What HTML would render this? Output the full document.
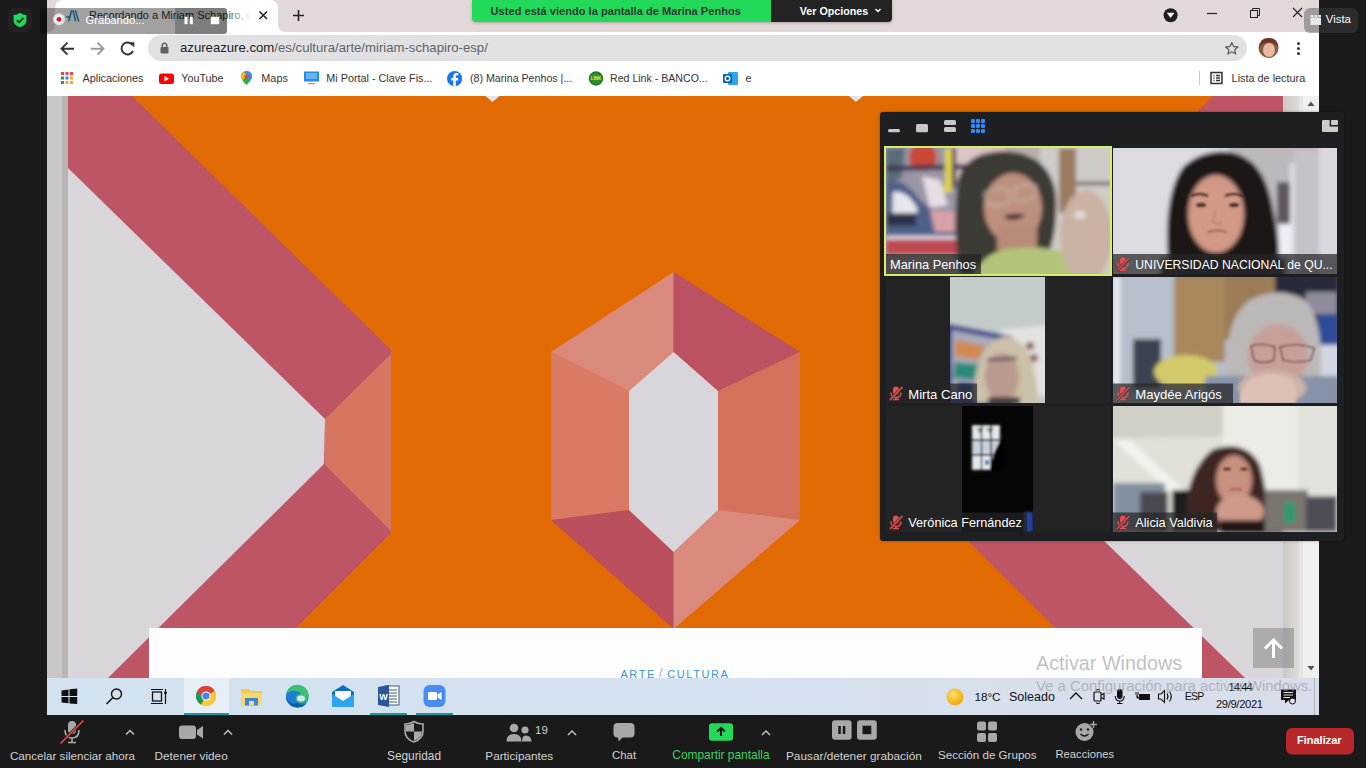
<!DOCTYPE html>
<html><head><meta charset="utf-8">
<style>
*{margin:0;padding:0;box-sizing:border-box}
html,body{width:1366px;height:768px;overflow:hidden;background:#1a1a1a;font-family:"Liberation Sans",sans-serif}
.a{position:absolute}
.t{position:absolute;white-space:nowrap;line-height:1}
svg{position:absolute;left:0;top:0}
</style></head><body>

<!-- ===== BROWSER CHROME ===== -->
<div class="a" style="left:47px;top:0;width:1272px;height:32px;background:#e3d8d8"></div>
<div class="a" style="left:47px;top:32px;width:1272px;height:64px;background:#fff"></div>
<!-- active tab -->
<div class="a" style="left:55px;top:0;width:223px;height:33px;background:#fff;border-radius:8px 8px 0 0"></div>
<svg width="1366" height="100" style="left:0;top:0">
  <path d="M47,32 Q55,32 55,24 L55,32 Z" fill="#fff"/>
  <path d="M278,24 Q278,32 286,32 L278,32 Z" fill="#fff"/>
  <!-- favicon -->
  <path d="M66.3,17 L70,17 M68.8,21.2 L71.6,10.2 M72.8,10.2 L75.6,21.2 M75.2,10.2 L78.7,21.2" stroke="#1f8bb3" stroke-width="1.5" fill="none"/>
  <!-- tab close -->
  <path d="M259.5,11.5 L267,19 M267,11.5 L259.5,19" stroke="#222" stroke-width="1.6"/>
  <!-- new tab plus -->
  <path d="M298.5,10 L298.5,21 M293,15.5 L304,15.5" stroke="#222" stroke-width="1.6"/>
  <!-- window controls -->
  <circle cx="1170.6" cy="15.3" r="7" fill="#1f1f1f"/>
  <path d="M1166.8,12.8 L1174.4,12.8 L1170.6,18 Z" fill="#fff"/>
  <path d="M1207,13.5 L1217,13.5" stroke="#222" stroke-width="1.2"/>
  <rect x="1250.5" y="10.5" width="7" height="7" fill="none" stroke="#222" stroke-width="1"/>
  <path d="M1252.5,10.5 L1252.5,8.5 L1259.5,8.5 L1259.5,15.5 L1257.5,15.5" fill="none" stroke="#222" stroke-width="1"/>
  <path d="M1293,8 L1302,17 M1302,8 L1293,17" stroke="#222" stroke-width="1.1"/>
  <!-- nav -->
  <path d="M61.5,48.7 L74,48.7 M67.5,42.7 L61.5,48.7 L67.5,54.7" stroke="#333" stroke-width="1.9" fill="none"/>
  <path d="M90.8,48.7 L103.5,48.7 M97.5,42.7 L103.5,48.7 L97.5,54.7" stroke="#9a9a9a" stroke-width="1.9" fill="none"/>
  <path d="M132.5,45 A6,6 0 1 0 133,51" stroke="#333" stroke-width="1.9" fill="none"/>
  <path d="M129,42.3 L134.3,42.3 L134.3,47.5 Z" fill="#333"/>
  <!-- omnibox -->
  <rect x="148" y="35" width="1099" height="26" rx="13" fill="#e1e1e3"/>
  <rect x="160.5" y="47" width="8" height="6.5" rx="1" fill="#5f6368"/>
  <path d="M162.3,47.5 L162.3,45.5 A2.2,2.2 0 0 1 166.7,45.5 L166.7,47.5" stroke="#5f6368" stroke-width="1.5" fill="none"/>
  <path d="M1231.8,42.5 L1233.6,46.5 L1238,46.9 L1234.7,49.8 L1235.7,54 L1231.8,51.8 L1227.9,54 L1228.9,49.8 L1225.6,46.9 L1230,46.5 Z" fill="none" stroke="#5f6368" stroke-width="1.3" stroke-linejoin="round"/>
  <circle cx="1268.5" cy="48" r="10" fill="#8a5a44"/>
  <ellipse cx="1269" cy="50" rx="6" ry="7" fill="#e7b9a0"/>
  <path d="M1259,48 Q1260,37 1269,38 Q1278,38 1278.5,48 Q1276,42 1269,42.5 Q1262,42 1259,48 Z" fill="#6d3522"/>
  <circle cx="1298.5" cy="43.5" r="1.5" fill="#333"/><circle cx="1298.5" cy="48.5" r="1.5" fill="#333"/><circle cx="1298.5" cy="53.5" r="1.5" fill="#333"/>
  <!-- bookmarks icons -->
  <g>
    <rect x="61" y="72" width="3" height="3" fill="#e84545"/><rect x="65.5" y="72" width="3" height="3" fill="#e84545"/><rect x="70" y="72" width="3" height="3" fill="#e84545"/>
    <rect x="61" y="76.5" width="3" height="3" fill="#2f9a4e"/><rect x="65.5" y="76.5" width="3" height="3" fill="#3d7ff0"/><rect x="70" y="76.5" width="3" height="3" fill="#f5a623"/>
    <rect x="61" y="81" width="3" height="3" fill="#2f9a4e"/><rect x="65.5" y="81" width="3" height="3" fill="#f5a623"/><rect x="70" y="81" width="3" height="3" fill="#f5a623"/>
  </g>
  <rect x="159" y="73.5" width="15" height="10.5" rx="2.5" fill="#f00"/>
  <path d="M164.5,76 L164.5,81.5 L169,78.75 Z" fill="#fff"/>
  <path d="M246.5,71 A5.5,5.5 0 0 0 241,76.5 C241,80 246.5,85 246.5,85 C246.5,85 252,80 252,76.5 A5.5,5.5 0 0 0 246.5,71 Z" fill="#34a853"/>
  <path d="M246.5,71 A5.5,5.5 0 0 1 252,76.5 C252,78 251,79.5 250,81 L244,73 Z" fill="#4285f4"/>
  <path d="M241,76.5 A5.5,5.5 0 0 1 244,72 L247,75 L243,80 C242,79 241,78 241,76.5Z" fill="#fbbc04"/>
  <circle cx="246.5" cy="76.5" r="2" fill="#ea4335"/>
  <rect x="304" y="71.5" width="15" height="10" fill="#2c8ae0"/>
  <rect x="306" y="73" width="11" height="6" fill="#63b3f5"/>
  <rect x="308" y="83" width="7" height="1.3" fill="#8ab"/>
  <circle cx="454.6" cy="78.7" r="7.6" fill="#1877f2"/>
  <path d="M455.8,86.3 L455.8,80.5 L458,80.5 L458.3,78 L455.8,78 L455.8,76.6 Q455.8,75.3 457.2,75.3 L458.4,75.3 L458.4,73.2 Q457.5,73 456.5,73 Q453.3,73 453.3,76.3 L453.3,78 L451.2,78 L451.2,80.5 L453.3,80.5 L453.3,86.3 Z" fill="#fff"/>
  <circle cx="596" cy="78.5" r="7.2" fill="#1f7a1f"/>
  <circle cx="596" cy="78.5" r="5.5" fill="#2d8f2d"/>
  <text x="596" y="80.3" font-size="4.5" font-family="Liberation Sans" font-weight="bold" fill="#e7f04a" text-anchor="middle">LINK</text>
  <rect x="728" y="72" width="10" height="13" rx="1" fill="#28a8ea"/>
  <rect x="723" y="74" width="9" height="9" rx="1" fill="#0a64b4"/>
  <circle cx="727.5" cy="78.5" r="2.3" fill="none" stroke="#fff" stroke-width="1.3"/>
  <path d="M1199.5,71 L1199.5,85" stroke="#c7c7c7" stroke-width="1"/>
  <rect x="1211" y="72.5" width="11" height="11" fill="none" stroke="#333" stroke-width="1.5"/>
  <path d="M1213.5,75.5 L1214.5,75.5 M1213.5,78 L1214.5,78 M1213.5,80.5 L1214.5,80.5 M1216,75.5 L1220,75.5 M1216,78 L1220,78 M1216,80.5 L1220,80.5" stroke="#333" stroke-width="1.3"/>
</svg>
<div class="t" style="left:89px;top:9.7px;font-size:11px;color:#333;width:160px;overflow:hidden">Recordando a Miriam Schapiro, u</div>
<div class="a" style="left:225px;top:5px;width:28px;height:22px;background:linear-gradient(90deg,rgba(255,255,255,0),#fff)"></div>
<div class="t" style="left:180px;top:41.2px;font-size:13.16px;color:#5f6368"><span style="color:#202124">azureazure.com</span>/es/cultura/arte/miriam-schapiro-esp/</div>
<div class="t" style="left:82.5px;top:72.6px;font-size:10.86px;color:#333">Aplicaciones</div>
<div class="t" style="left:181.3px;top:72.6px;font-size:10.75px;color:#333">YouTube</div>
<div class="t" style="left:261.3px;top:72.6px;font-size:10.9px;color:#333">Maps</div>
<div class="t" style="left:326.3px;top:72.6px;font-size:10.8px;color:#333">Mi Portal - Clave Fis...</div>
<div class="t" style="left:470px;top:72.6px;font-size:10.67px;color:#333">(8) Marina Penhos |...</div>
<div class="t" style="left:610px;top:72.6px;font-size:10.6px;color:#333">Red Link - BANCO...</div>
<div class="t" style="left:745.4px;top:72.6px;font-size:10.86px;color:#333">e</div>
<div class="t" style="left:1231.6px;top:72.6px;font-size:10.87px;color:#333">Lista de lectura</div>

<!-- ===== TOP OVERLAYS (drawn later via z-index) ===== -->
<div class="a" style="z-index:50;left:40px;top:8px;width:135px;height:26px;background:rgba(0,0,0,0.37);border-radius:3px 0 0 3px"></div>
<div class="a" style="z-index:50;left:175px;top:8px;width:52px;height:26px;background:rgba(0,0,0,0.51);border-radius:0 3px 3px 0"></div>
<svg width="300" height="40" style="z-index:51;left:0;top:0">
  <circle cx="59" cy="19.3" r="6" fill="#dcdcdc"/>
  <circle cx="59" cy="19.3" r="4.3" fill="#f4f4f4"/>
  <circle cx="59" cy="19.3" r="2.4" fill="#e0141e"/>
  <rect x="184.5" y="16.8" width="3" height="7.4" fill="#fff"/>
  <rect x="189.8" y="16.8" width="3" height="7.4" fill="#fff"/>
  <rect x="210.8" y="16.8" width="8.4" height="7.4" fill="#fff"/>
</svg>
<div class="t" style="z-index:51;left:85.5px;top:14.7px;font-size:11.2px;color:#fff">Grabando...</div>
<div class="a" style="z-index:50;left:472px;top:0;width:420px;height:22px;border-radius:0 0 4px 4px;overflow:hidden;box-shadow:0 1px 3px rgba(0,0,0,0.25)">
  <div class="a" style="left:0;top:0;width:299px;height:22px;background:#23d95a"></div>
  <div class="a" style="left:299px;top:0;width:121px;height:22px;background:#232323"></div>
</div>
<div class="t" style="z-index:51;left:490.6px;top:6px;font-size:11.1px;font-weight:bold;color:#2f3a35">Usted está viendo la pantalla de Marina Penhos</div>
<div class="t" style="z-index:51;left:799.8px;top:6px;font-size:10.7px;font-weight:bold;color:#fff">Ver Opciones</div>
<svg width="20" height="20" style="z-index:51;left:870px;top:0">
  <path d="M5.5,9 L8,11.5 L10.5,9" stroke="#fff" stroke-width="1.4" fill="none"/>
</svg>
<div class="a" style="z-index:50;left:1304px;top:8px;width:54px;height:25px;background:rgba(70,70,70,0.42);border-radius:6px"></div>
<svg width="30" height="40" style="z-index:51;left:1305px;top:0">
  <rect x="5.5" y="17.5" width="10.5" height="7.5" fill="#e6e6e6"/>
  <rect x="5.5" y="15" width="3" height="2" fill="#e6e6e6"/>
  <rect x="9.5" y="15" width="2.5" height="2" fill="#e6e6e6"/>
  <rect x="13" y="15" width="3" height="2" fill="#e6e6e6"/>
</svg>
<div class="t" style="z-index:51;left:1325.8px;top:13.5px;font-size:11.4px;color:#fff">Vista</div>

<div class="a" style="left:8px;top:8px;width:24px;height:24px;border-radius:6px;background:#222"></div>
<svg width="40" height="40" style="left:0;top:0">
  <path d="M20,12.8 Q23,15 26.4,15 L26.4,20.5 Q26.4,25 20,27.2 Q13.6,25 13.6,20.5 L13.6,15 Q17,15 20,12.8 Z" fill="#23d95a"/>
  <path d="M16.8,20.2 L19,22.4 L23.4,18" stroke="#1f2a22" stroke-width="1.7" fill="none"/>
</svg>
<!-- ===== PAGE ART ===== -->
<svg width="1366" height="768" viewBox="0 0 1366 768">
  <rect x="47" y="96" width="15" height="582" fill="#c9c7c5"/>
  <rect x="62" y="96" width="6" height="582" fill="#bab5b2"/>
  <rect x="68" y="96" width="1215" height="582" fill="#e26a02"/>
  <!-- left band -->
  <polygon points="68,96 132,96 391,350 391,533 246,678 68,678" fill="#bd5565"/>
  <polygon points="68,168 325,419 324,464 108,678 68,678" fill="#d8d6db"/>
  <polygon points="325,419 391,354 391,531 325,465" fill="#d67661"/>
  <!-- right band -->
  <polygon points="1283,96 1213,96 960,350 960,533 1105,678 1283,678" fill="#bd5565"/>
  <polygon points="1283,168 1026,419 1025,464 1245,678 1283,678" fill="#d8d6db"/>
  <polygon points="1026,419 960,354 960,531 1026,465" fill="#d67661"/>
  <!-- gem -->
  <polygon points="673.6,272 551,352 629,391 673.6,352" fill="#d98a7c"/>
  <polygon points="673.6,272 800,352 718,391 673.6,352" fill="#bb5161"/>
  <polygon points="551,352 551,520 629,510 629,391" fill="#d97a65"/>
  <polygon points="800,352 800,520 718,510 718,391" fill="#d4715c"/>
  <polygon points="551,520 673.6,629 673.6,552 629,510" fill="#bb4f5e"/>
  <polygon points="800,520 673.6,629 673.6,552 718,510" fill="#da8a7c"/>
  <polygon points="673.6,352 718,391 718,510 673.6,552 629,510 629,391" fill="#d8d6dc"/>
  <!-- top triangles -->
  <polygon points="485.5,96 499.5,96 492.5,102" fill="#e4e4e6"/>
  <polygon points="849,96 863,96 856,102" fill="#e4e4e6"/>
  <!-- right strip + scrollbar -->
  <defs><linearGradient id="rs" x1="0" x2="1" y1="0" y2="0"><stop offset="0" stop-color="#ccc8c6"/><stop offset="0.75" stop-color="#dedad7"/><stop offset="0.9" stop-color="#ebe8e5"/><stop offset="1" stop-color="#e2dfdc"/></linearGradient></defs>
  <rect x="1283" y="96" width="20" height="582" fill="url(#rs)"/>
  <rect x="1303" y="96" width="16" height="582" fill="#f0efed"/>
  <!-- white card -->
  <rect x="149" y="628" width="1053" height="50" fill="#fefefe"/>
</svg>

<!-- ===== TASKBAR ===== -->
<!-- page overlays -->
<div class="t" style="left:620.4px;top:669px;font-size:11px;letter-spacing:1.6px;color:#3592e6">ARTE</div>
<div class="t" style="left:659px;top:665.5px;font-size:13px;color:#a7a6e0">/</div>
<div class="t" style="left:667.3px;top:669px;font-size:11px;letter-spacing:1.55px;color:#3592e6">CULTURA</div>
<div class="a" style="left:1253px;top:628px;width:41px;height:40px;background:rgba(125,125,125,0.5)"></div>
<svg width="60" height="60" style="left:1245px;top:620px">
  <path d="M28.5,38 L28.5,20 M20,28.5 L28.5,20 L37,28.5" stroke="#fff" stroke-width="3" fill="none"/>
  <path d="M62,44 L68,44 L65,48 Z" fill="#505050"/>
</svg>
<svg width="30" height="20" style="left:1303px;top:96px">
  <path d="M4.5,10 L11.5,10 L8,5.5 Z" fill="#505050"/>
</svg>
<svg width="30" height="20" style="left:1303px;top:660px">
  <path d="M4.5,6 L11.5,6 L8,10.5 Z" fill="#505050"/>
</svg>
<div class="t" style="z-index:40;left:1036px;top:653.5px;font-size:19.8px;color:rgba(150,150,150,0.6)">Activar Windows</div>
<div class="t" style="z-index:40;left:1036px;top:678.5px;font-size:14.9px;color:rgba(140,140,140,0.55)">Ve a Configuración para activar Windows.</div>

<!-- taskbar -->
<div class="a" style="left:47px;top:678px;width:1272px;height:37px;background:linear-gradient(90deg,#d3e2ef,#d5e2ef 55%,#d8dfec 80%,#d9dcea)"></div>
<div class="a" style="left:184px;top:678px;width:45px;height:37px;background:#e7eff6"></div>
<div class="a" style="left:184px;top:713px;width:45px;height:2px;background:#0f9ca3"></div>
<div class="a" style="left:370px;top:713px;width:37px;height:2px;background:#0f9ca3"></div>
<div class="a" style="left:416px;top:713px;width:37px;height:2px;background:#0f9ca3"></div>
<div class="a" style="left:1314px;top:678px;width:1px;height:37px;background:#a9b4bd"></div>
<svg width="1366" height="768" style="left:0;top:0;z-index:5">
  <!-- windows logo -->
  <path d="M61.5,690.5 L68.5,689.5 L68.5,696 L61.5,696 Z M69.5,689.3 L77.2,688.5 L77.2,696 L69.5,696 Z M61.5,697 L68.5,697 L68.5,703.3 L61.5,702.5 Z M69.5,697 L77.2,697 L77.2,704 L69.5,703.4 Z" fill="#111"/>
  <!-- search -->
  <circle cx="116.5" cy="694" r="5" fill="none" stroke="#111" stroke-width="1.4"/>
  <path d="M112.8,697.8 L106.5,704" stroke="#111" stroke-width="1.5"/>
  <!-- task view -->
  <path d="M151,689.5 L163,689.5 M151,703.5 L163,703.5" stroke="#111" stroke-width="1.2"/>
  <rect x="152.5" y="692" width="9" height="9" fill="none" stroke="#111" stroke-width="1.3"/>
  <path d="M165.5,689 L165.5,704" stroke="#111" stroke-width="1.2"/>
  <circle cx="165.5" cy="693" r="1.4" fill="#111"/>
  <!-- chrome -->
  <circle cx="206" cy="696" r="10" fill="#db4437"/>
  <path d="M206,696 L197.3,691 A10,10 0 0 0 201,704.66 Z" fill="#0f9d58"/>
  <path d="M206,696 L201,704.66 A10,10 0 0 0 215.8,694 L214.66,691 Z" fill="#fcc934"/>
  <path d="M206,686 A10,10 0 0 0 197.3,691 L202,697 L206,691 L214.66,691 A10,10 0 0 0 206,686Z" fill="#db4437"/>
  <circle cx="206" cy="696" r="4.6" fill="#fff"/>
  <circle cx="206" cy="696" r="3.6" fill="#4285f4"/>
  <!-- explorer -->
  <path d="M241,689 L249,689 L251,691 L262,691 L262,705.5 L241,705.5 Z" fill="#f3c94d"/>
  <path d="M241,693 L262,693 L262,705.5 L241,705.5 Z" fill="#f8d775"/>
  <rect x="245" y="698" width="13" height="7.5" fill="#3b86d6"/>
  <rect x="249" y="701" width="5" height="4.5" fill="#f8d775"/>
  <!-- edge -->
  <circle cx="297.3" cy="696.2" r="11.3" fill="#1b7ed4"/>
  <path d="M286.5,693 A11.3,11.3 0 0 1 308.6,695 Q309,702 302,703 Q296,703 295.5,698 Q296,694 301,694 Q296,688 286.5,693 Z" fill="#3dbf74"/>
  <path d="M297.3,707.5 A11.3,11.3 0 0 1 286,696 Q289,706 297,703 Q301,706 306,704 A11.3,11.3 0 0 1 297.3,707.5Z" fill="#0c5ba4"/>
  <ellipse cx="301" cy="698.5" rx="4" ry="3" fill="#d5e3ef"/>
  <!-- mail -->
  <path d="M332,692 L343,685 L354,692 L354,707 L332,707 Z" fill="#0f6cc5"/>
  <path d="M335,691 L351,691 L351,697 L343,702 L335,697 Z" fill="#f4f7fb"/>
  <path d="M332,694 L343,701 L354,694 L354,707 L332,707 Z" fill="#2ea4ec"/>
  <!-- word -->
  <rect x="385" y="686" width="14" height="19" fill="#fff" stroke="#41577d" stroke-width="1"/>
  <path d="M388,690 L397,690 M388,693 L397,693 M388,696 L397,696 M388,699 L397,699 M388,702 L397,702" stroke="#41577d" stroke-width="1"/>
  <path d="M378,687 L389,685 L389,707 L378,705 Z" fill="#2b579a"/>
  <text x="379.3" y="700" font-size="9" font-family="Liberation Sans" font-weight="bold" fill="#fff">W</text>
  <!-- zoom -->
  <rect x="423.5" y="685" width="22" height="22" rx="6" fill="#4a8bf0"/>
  <rect x="428" y="692" width="9" height="8" rx="1.5" fill="#fff"/>
  <path d="M437.5,694.5 L441.5,692 L441.5,700 L437.5,697.5 Z" fill="#fff"/>
  <!-- tray -->
  <defs><radialGradient id="sun" cx="0.4" cy="0.35" r="0.7"><stop offset="0" stop-color="#ffe06a"/><stop offset="1" stop-color="#f5a200"/></radialGradient></defs>
  <circle cx="955" cy="697" r="8.5" fill="url(#sun)"/>
  <path d="M1070,699 L1076,693 L1082,699" stroke="#111" stroke-width="1.3" fill="none"/>
  <rect x="1094" y="692" width="7" height="9" rx="1" fill="none" stroke="#111" stroke-width="1.2"/>
  <path d="M1101,695 L1104,693.5 L1104,699 L1101,697.5" fill="none" stroke="#111" stroke-width="1.2"/>
  <path d="M1096,690 Q1098,689 1100,690 M1096,703 Q1098,704 1100,703" stroke="#111" stroke-width="1" fill="none"/>
  <rect x="1117" y="689" width="5.5" height="10" rx="2.75" fill="#111"/>
  <path d="M1115.3,696 Q1115.3,701 1119.75,701 Q1124.2,701 1124.2,696 M1119.75,701 L1119.75,703.5 M1117,703.5 L1122.5,703.5" stroke="#111" stroke-width="1.1" fill="none"/>
  <rect x="1139" y="694" width="11" height="6" fill="#111"/>
  <path d="M1136,692 L1136,695 M1138,692 L1138,695 M1137,695 L1137,698 L1139,698" stroke="#111" stroke-width="1"/>
  <path d="M1158.5,694 L1161,694 L1164.5,690.5 L1164.5,702.5 L1161,699 L1158.5,699 Z" fill="none" stroke="#111" stroke-width="1.1"/>
  <path d="M1167,693.5 Q1169,696.5 1167,699.5 M1169.5,691.5 Q1173,696.5 1169.5,701.5" stroke="#111" stroke-width="1.1" fill="none"/>
  <path d="M1281,689.5 L1296,689.5 L1296,700 L1289,700 L1285,703.5 L1285,700 L1281,700 Z" fill="#111"/>
  <path d="M1283.5,692.5 L1293,692.5 M1283.5,695 L1293,695 M1283.5,697.5 L1290,697.5" stroke="#dde6ee" stroke-width="1"/>
  <circle cx="1292.5" cy="701" r="3" fill="#dde6ee" stroke="#111" stroke-width="1"/>
</svg>
<div class="t" style="z-index:6;left:974.4px;top:691px;font-size:11.7px;color:#111">18°C</div>
<div class="t" style="z-index:6;left:1009px;top:691px;font-size:12.5px;color:#111">Soleado</div>
<div class="t" style="z-index:6;left:1184.7px;top:690.8px;font-size:10.6px;letter-spacing:-0.8px;color:#111">ESP</div>
<div class="t" style="z-index:6;left:1228.4px;top:681.7px;font-size:11.2px;letter-spacing:-0.9px;color:#111">14:44</div>
<div class="t" style="z-index:6;left:1216px;top:698.9px;font-size:11.2px;letter-spacing:-0.35px;color:#111">29/9/2021</div>

<!-- ===== ZOOM TOOLBAR ===== -->
<div class="a" style="left:0;top:715px;width:1366px;height:53px;background:#1a1a1a"></div>
<svg width="1366" height="60" style="left:0;top:712px">
  <g transform="translate(0,-712)">
  <!-- mic -->
  <rect x="68" y="721" width="8" height="13" rx="4" fill="#a8a8a8"/>
  <path d="M65,730 Q65,738 72,738 Q79,738 79,730 M72,738 L72,742 M68,742.5 L76,742.5" stroke="#a8a8a8" stroke-width="1.6" fill="none"/>
  <path d="M60.5,743.5 L83.3,720.6" stroke="#1a1a1a" stroke-width="3"/>
  <path d="M60.5,743.5 L83.3,720.6" stroke="#e4484c" stroke-width="1.5"/>
  <path d="M126,734.5 L130,730.5 L134,734.5" stroke="#c8c8c8" stroke-width="1.4" fill="none"/>
  <!-- video -->
  <rect x="179" y="725.5" width="17" height="13.5" rx="3" fill="#a8a8a8"/>
  <path d="M197,730 L203,726 L203,738.5 L197,734.5 Z" fill="#a8a8a8"/>
  <path d="M224,734.5 L228,730.5 L232,734.5" stroke="#c8c8c8" stroke-width="1.4" fill="none"/>
  <!-- shield -->
  <path d="M414,721.5 Q419,724.5 423,724 L423,731 Q423,739 414,742 Q405,739 405,731 L405,724 Q409,724.5 414,721.5 Z" fill="none" stroke="#a8a8a8" stroke-width="1.6"/>
  <path d="M414,723 L414,731.5 L406,731.5 L406,725 Q410,725 414,723 Z M414,731.5 L422,731.5 Q421.5,738.5 414,741 Z" fill="#a8a8a8"/>
  <!-- participants -->
  <circle cx="514" cy="728" r="4.3" fill="#a8a8a8"/>
  <path d="M506.5,741.5 Q506.5,734 514,734 Q521.5,734 521.5,741.5 Z" fill="#a8a8a8"/>
  <circle cx="525" cy="730" r="3.6" fill="#a8a8a8"/>
  <path d="M522,741.5 Q522,735.5 525.5,735.5 Q531.5,735.5 531.5,741.5 Z" fill="#a8a8a8"/>
  <path d="M568,735 L572,731 L576,735" stroke="#c8c8c8" stroke-width="1.4" fill="none"/>
  <!-- chat -->
  <rect x="613.5" y="723" width="21" height="14.5" rx="4" fill="#a8a8a8"/>
  <path d="M618,736 L618.5,741.5 L624,736 Z" fill="#a8a8a8"/>
  <!-- share -->
  <rect x="709" y="723.3" width="24" height="17.5" rx="3" fill="#23d95a"/>
  <path d="M721,736 L721,728 M717.3,731.5 L721,727.8 L724.7,731.5" stroke="#111" stroke-width="2" fill="none"/>
  <path d="M762,735 L766,731 L770,735" stroke="#c8c8c8" stroke-width="1.4" fill="none"/>
  <!-- pause/stop -->
  <rect x="832" y="720.2" width="19.6" height="19.5" rx="3" fill="#a8a8a8"/>
  <rect x="838.3" y="726" width="2.5" height="8" fill="#1a1a1a"/><rect x="842.8" y="726" width="2.5" height="8" fill="#1a1a1a"/>
  <rect x="857" y="720.2" width="19.8" height="19.5" rx="3" fill="#a8a8a8"/>
  <rect x="862.5" y="725.7" width="8.8" height="8.5" fill="#1a1a1a"/>
  <!-- grupos -->
  <rect x="977" y="721.6" width="9" height="9" rx="2" fill="#a8a8a8"/><rect x="988" y="721.6" width="9" height="9" rx="2" fill="#a8a8a8"/>
  <rect x="977" y="733" width="9" height="9" rx="2" fill="#a8a8a8"/><rect x="988" y="733" width="9" height="9" rx="2" fill="#a8a8a8"/>
  <!-- reactions -->
  <circle cx="1084.5" cy="732" r="9" fill="#a8a8a8"/>
  <circle cx="1081" cy="729.5" r="1.2" fill="#1a1a1a"/><circle cx="1088" cy="729.5" r="1.2" fill="#1a1a1a"/>
  <path d="M1080.5,734 Q1084.5,738 1088.5,734" stroke="#1a1a1a" stroke-width="1.4" fill="none"/>
  <path d="M1093.5,721 L1093.5,728 M1090,724.5 L1097,724.5" stroke="#1a1a1a" stroke-width="3.5"/>
  <path d="M1093.5,721 L1093.5,728 M1090,724.5 L1097,724.5" stroke="#a8a8a8" stroke-width="1.4"/>
  <!-- finalizar -->
  <rect x="1286" y="728" width="68" height="26.5" rx="6" fill="#b8282a"/>
  </g>
</svg>
<div class="t" style="left:10px;top:750px;font-size:11.6px;color:#d2d2d2">Cancelar silenciar ahora</div>
<div class="t" style="left:154.6px;top:750px;font-size:11.74px;color:#d2d2d2">Detener video</div>
<div class="t" style="left:387px;top:750.5px;font-size:11.85px;color:#d2d2d2">Seguridad</div>
<div class="t" style="left:535px;top:724.5px;font-size:11.5px;color:#d2d2d2">19</div>
<div class="t" style="left:485.3px;top:750px;font-size:11.76px;color:#d2d2d2">Participantes</div>
<div class="t" style="left:612px;top:750px;font-size:11.4px;color:#d2d2d2">Chat</div>
<div class="t" style="left:672.3px;top:750px;font-size:11.92px;color:#3ad264">Compartir pantalla</div>
<div class="t" style="left:786px;top:750.8px;font-size:11.8px;color:#d2d2d2">Pausar/detener grabación</div>
<div class="t" style="left:938px;top:748.7px;font-size:11.6px;color:#d2d2d2">Sección de Grupos</div>
<div class="t" style="left:1055.4px;top:749px;font-size:11.25px;color:#d2d2d2">Reacciones</div>
<div class="t" style="left:1297px;top:735.3px;font-size:11px;font-weight:bold;color:#fff">Finalizar</div>

<!-- ===== GALLERY ===== -->
<div class="a" style="z-index:20;left:880px;top:112px;width:464px;height:429px;background:#1e1f22;border-radius:3px;box-shadow:0 0 3px rgba(0,0,0,0.35)"></div>
<svg width="1366" height="768" style="z-index:21;left:0;top:0">
  <defs>
    <filter id="bl" x="-5%" y="-5%" width="110%" height="110%"><feGaussianBlur stdDeviation="2.2"/></filter>
    <filter id="bl1"><feGaussianBlur stdDeviation="1"/></filter>
    <clipPath id="c1"><rect x="886" y="148" width="224" height="126"/></clipPath>
    <clipPath id="c2"><rect x="1113" y="148" width="224" height="126"/></clipPath>
    <clipPath id="c3"><rect x="950" y="277" width="95" height="126"/></clipPath>
    <clipPath id="c4"><rect x="1113" y="277" width="224" height="126"/></clipPath>
    <clipPath id="c5"><rect x="962" y="406" width="71" height="126"/></clipPath>
    <clipPath id="c6"><rect x="1113" y="406" width="224" height="126"/></clipPath>
  </defs>
  <!-- panel toolbar icons -->
  <rect x="888" y="129" width="12" height="3.3" rx="1.5" fill="#c8c8c8"/>
  <rect x="916" y="124" width="12" height="8.2" rx="1.5" fill="#c8c8c8"/>
  <rect x="944" y="120" width="12" height="5" rx="1.5" fill="#c8c8c8"/>
  <rect x="944" y="127" width="12" height="5" rx="1.5" fill="#c8c8c8"/>
  <g fill="#2d8cff">
    <rect x="971" y="119" width="4" height="4" rx="1.2"/><rect x="976" y="119" width="4" height="4" rx="1.2"/><rect x="981" y="119" width="4" height="4" rx="1.2"/>
    <rect x="971" y="124" width="4" height="4" rx="1.2"/><rect x="976" y="124" width="4" height="4" rx="1.2"/><rect x="981" y="124" width="4" height="4" rx="1.2"/>
    <rect x="971" y="129" width="4" height="4" rx="1.2"/><rect x="976" y="129" width="4" height="4" rx="1.2"/><rect x="981" y="129" width="4" height="4" rx="1.2"/>
  </g>
  <path d="M1322,121 Q1322,120 1323,120 L1329.6,120 L1329.6,126.4 L1338,126.4 L1338,131 Q1338,132 1337,132 L1323,132 Q1322,132 1322,131 Z" fill="#cccccc"/>
  <rect x="1331" y="120" width="7" height="5" rx="1" fill="#cccccc"/>
  <!-- tile bgs -->
  <rect x="886" y="277" width="224" height="126" fill="#232323"/>
  <rect x="886" y="406" width="224" height="126" fill="#232323"/>
  <!-- T1 Marina -->
  <rect x="884" y="146" width="228" height="130" fill="#d6ec6e"/>
  <g clip-path="url(#c1)"><g filter="url(#bl)">
    <rect x="880" y="140" width="240" height="140" fill="#b8b0aa"/>
    <rect x="880" y="140" width="80" height="115" fill="#9a96a4"/>
    <rect x="956" y="140" width="50" height="40" fill="#dcc4c4"/>
    <path d="M886,148 L905,148 L902,178 L886,182Z" fill="#5a6a78"/>
    <circle cx="923" cy="157" r="14" fill="#c84a38"/>
    <path d="M886,166 L975,164 L975,169 L886,171Z" fill="#3a3050"/>
    <rect x="945" y="148" width="7" height="44" fill="#e2d24a"/>
    <rect x="934" y="186" width="18" height="6" fill="#e2d24a"/>
    <rect x="952" y="148" width="4" height="40" fill="#283050"/>
    <path d="M886,180 Q905,178 920,200 Q935,215 958,215 L958,236 L886,236Z" fill="#4f6088"/>
    <path d="M893,192 Q908,190 918,210 L910,224 L892,222Z" fill="#e8e6ee"/>
    <path d="M922,176 L940,180 L948,205 L930,208Z" fill="#e6dde6"/>
    <path d="M930,210 L955,212 L955,232 L935,232Z" fill="#d8a0a8"/>
    <rect x="886" y="213" width="30" height="13" fill="#2c3046"/>
    <rect x="886" y="236" width="74" height="3" fill="#e6e6ee"/>
    <rect x="886" y="239" width="89" height="16" fill="#bf4a52"/>
    <rect x="1040" y="140" width="80" height="140" fill="#cfcbc7"/>
    <rect x="1059" y="148" width="17" height="65" fill="#9a7a60"/>
    <rect x="1076" y="182" width="36" height="3" fill="#3a3a3a"/>
    <path d="M958,180 Q965,152 1004,151 Q1050,153 1056,195 Q1058,230 1048,255 L1040,275 L960,275 Q952,235 958,180 Z" fill="#3e3a36"/>
    <ellipse cx="1013" cy="208" rx="29" ry="35" fill="#bd907e"/>
    <rect x="997" y="225" width="40" height="25" fill="#b88a78"/>
    <path d="M984,193 Q996,186 1008,190 L1010,202 Q998,208 987,204 Z M1014,189 Q1026,183 1037,186 L1035,197 Q1024,203 1015,200 Z" fill="none" stroke="#cfc5ba" stroke-width="1.1"/>
    <path d="M1004,216 Q1015,212 1026,215 Q1016,222 1006,219Z" fill="#402a26"/>
    <path d="M972,280 Q982,252 1008,249 Q1045,244 1075,255 L1080,280Z" fill="#b2c47a"/>
    <ellipse cx="1086" cy="236" rx="26" ry="46" fill="#cab2a4"/>
    <ellipse cx="1080" cy="215" rx="6" ry="4" fill="#e4dace"/>
  </g></g>
  <!-- T2 Universidad -->
  <g clip-path="url(#c2)"><g filter="url(#bl)">
    <rect x="1108" y="140" width="240" height="140" fill="#dbdbe1"/>
    <rect x="1229" y="140" width="120" height="140" fill="#bbb8be"/>
    <rect x="1290" y="163" width="4" height="115" fill="#e2dfe6"/>
    <rect x="1294" y="150" width="25" height="128" fill="#c6c2ca"/>
    <rect x="1319" y="140" width="25" height="140" fill="#dcd8e0"/>
    <rect x="1277" y="182" width="13" height="42" fill="#5e565e"/>
    <rect x="1279" y="224" width="13" height="32" fill="#eeeef6"/>
    <path d="M1168,262 Q1163,195 1183,167 Q1203,149 1230,152 Q1262,158 1271,200 Q1280,240 1279,262 Z" fill="#1f1919"/>
    <ellipse cx="1216" cy="214" rx="28" ry="39" fill="#d29a86"/>
    <rect x="1160" y="258" width="125" height="20" fill="#2a2020"/>
  </g>
  <g filter="url(#bl1)">
    <path d="M1191,196 Q1199,192 1208,196 M1225,196 Q1234,192 1243,196" stroke="#3a2420" stroke-width="2.2" fill="none"/>
    <ellipse cx="1201" cy="205" rx="5" ry="2" fill="#4a3028"/>
    <ellipse cx="1234" cy="205" rx="5" ry="2" fill="#4a3028"/>
    <path d="M1208,232 Q1217,229 1227,232" stroke="#a0605a" stroke-width="2" fill="none"/>
    <path d="M1215,210 L1213,222 Q1218,225 1222,222" stroke="#b87a6a" stroke-width="1.2" fill="none"/>
  </g></g>
  <!-- T3 Mirta -->
  <g clip-path="url(#c3)"><g filter="url(#bl)">
    <rect x="945" y="270" width="110" height="140" fill="#c4ccc9"/>
    <path d="M1000,330 L1050,325 L1050,395 L1000,395Z" fill="#e2e2e2"/>
    <path d="M945,323 L1012,336 L1012,410 L945,410Z" fill="#3a4a90"/>
    <path d="M952,330 L1008,341 L1006,398 L952,395Z" fill="#a8aab8"/>
    <path d="M955,340 L985,346 L978,360 L955,356Z" fill="#d08a50"/>
    <path d="M955,362 L980,365 L975,380 L953,378Z" fill="#2a8a7a"/>
    <path d="M958,382 L990,384 L985,398 L955,396Z" fill="#3a56a8"/>
    <circle cx="1030" cy="346" r="4" fill="#8a5a40"/>
    <circle cx="1034" cy="358" r="4" fill="#8a5a40"/>
    <path d="M974,403 Q972,345 1005,336 Q1036,340 1038,403Z" fill="#cbc0a8"/>
    <ellipse cx="1002" cy="377" rx="17" ry="24" fill="#b99a8f"/>
    <path d="M987,360 L1017,358" stroke="#3a3030" stroke-width="2.5"/>
    <rect x="988" y="397" width="32" height="8" fill="#4a3a3a"/>
  </g></g>
  <!-- T4 Maydee -->
  <g clip-path="url(#c4)"><g filter="url(#bl)">
    <rect x="1108" y="270" width="240" height="140" fill="#b6bfcb"/>
    <rect x="1113" y="277" width="7" height="126" fill="#e6ebf2"/>
    <rect x="1133" y="339" width="28" height="50" fill="#3c4252"/>
    <rect x="1174" y="272" width="51" height="90" fill="#a9875d"/>
    <rect x="1225" y="272" width="50" height="68" fill="#9b7b56"/>
    <rect x="1275" y="272" width="65" height="75" fill="#262b3a"/>
    <rect x="1306" y="292" width="31" height="22" fill="#8e8c9a"/>
    <rect x="1318" y="314" width="20" height="32" fill="#2e4c98"/>
    <rect x="1300" y="345" width="40" height="40" fill="#d2d6e2"/>
    <ellipse cx="1186" cy="372" rx="32" ry="17" fill="#d2c96a"/>
    <path d="M1228,380 Q1222,320 1250,300 Q1280,285 1305,300 Q1325,320 1320,385 Z" fill="#bcb8b7"/>
    <ellipse cx="1278" cy="356" rx="30" ry="32" fill="#c6a098"/>
    <rect x="1205" y="376" width="135" height="30" fill="#8692a8"/>
    <ellipse cx="1272" cy="388" rx="34" ry="17" fill="#d0b3a9"/>
  </g>
  <g filter="url(#bl1)">
    <path d="M1251,346 Q1262,342 1275,347 L1274,360 Q1262,365 1254,360 Z M1280,347 Q1295,342 1314,348 L1311,360 Q1297,364 1283,360 Z" fill="none" stroke="#6a3a40" stroke-width="1.1"/>
    <path d="M1250,380 Q1270,370 1290,378 Q1300,390 1295,403 L1240,403 Q1238,390 1250,380Z" fill="#dcc0b6"/>
  </g></g>
  <!-- T5 Veronica -->
  <g clip-path="url(#c5)">
    <rect x="962" y="406" width="71" height="126" fill="#050505"/>
    <g filter="url(#bl1)">
      <rect x="971" y="424" width="30" height="47" fill="#e4e8ee"/>
      <rect x="973" y="440" width="26" height="14" fill="#c8d0dc"/>
      <path d="M976,428 L980,434 L984,428 M986,428 L990,434 L994,428" fill="#8a9a70"/>
      <path d="M971,425 L1001,425 M971,440 L1001,440 M971,455 L1001,455 M971,470 L1001,470 M972,424 L972,471 M981.5,424 L981.5,471 M991,424 L991,471 M1000,424 L1000,471" stroke="#151515" stroke-width="1.3"/>
      <rect x="985" y="460" width="4" height="5" fill="#4a80c0"/>
      <path d="M990,471 Q992,450 1004,436 L1004,471Z" fill="#050505"/>
      <rect x="1024" y="512" width="9" height="20" fill="#2442a0"/>
    </g>
  </g>
  <!-- T6 Alicia -->
  <g clip-path="url(#c6)"><g filter="url(#bl)">
    <rect x="1108" y="400" width="240" height="140" fill="#e0e0d8"/>
    <path d="M1108,400 L1250,400 L1240,436 L1108,438Z" fill="#d0d0c6"/>
    <rect x="1223" y="400" width="75" height="105" fill="#ececE6"/>
    <rect x="1298" y="400" width="45" height="105" fill="#e2e2dc"/>
    <path d="M1113,440 L1130,440 L1182,488 L1172,494Z" fill="#f2f2ee"/>
    <rect x="1113" y="483" width="52" height="49" fill="#8290a0"/>
    <rect x="1140" y="492" width="28" height="40" fill="#4c4a50"/>
    <rect x="1172" y="490" width="27" height="42" fill="#1b1b1b"/>
    <path d="M1186,532 Q1182,475 1212,450 Q1245,438 1260,465 Q1270,500 1266,532Z" fill="#3e2820"/>
    <ellipse cx="1234" cy="480" rx="18" ry="25" fill="#c8907e"/>
    <ellipse cx="1240" cy="512" rx="24" ry="17" fill="#cf9a8a"/>
    <rect x="1221" y="520" width="62" height="14" fill="#201818"/>
    <rect x="1265" y="490" width="43" height="42" fill="#7a7470"/>
    <rect x="1284" y="502" width="11" height="21" fill="#2a9a70"/>
    <rect x="1306" y="496" width="31" height="36" fill="#4e4e56"/>
  </g>
  <g filter="url(#bl1)">
    <ellipse cx="1227" cy="469" rx="4" ry="1.6" fill="#5a3a30"/>
    <ellipse cx="1244" cy="469" rx="4" ry="1.6" fill="#5a3a30"/>
    <path d="M1230,490 Q1236,488 1242,490" stroke="#9a5a50" stroke-width="1.5" fill="none"/>
  </g></g>
  <!-- labels -->
  <rect x="886" y="254" width="95" height="20" fill="rgba(38,38,38,0.72)"/>
  <rect x="1113" y="254" width="224" height="20" fill="rgba(38,38,38,0.72)"/>
  <rect x="886" y="383.5" width="91" height="19.5" fill="rgba(38,38,38,0.72)"/>
  <rect x="1113" y="383.5" width="120" height="19.5" fill="rgba(38,38,38,0.72)"/>
  <rect x="886" y="512.5" width="141" height="19.5" fill="rgba(38,38,38,0.72)"/>
  <rect x="1113" y="512.5" width="104" height="19.5" fill="rgba(38,38,38,0.72)"/>
  <g id="mic">
  </g>
</svg>
<svg width="1366" height="768" style="z-index:22;left:0;top:0">
  <defs>
    <g id="mm">
      <rect x="3.5" y="0" width="6" height="8.5" rx="3" fill="#ea4b4f"/>
      <path d="M1.5,6 Q1.5,11 6.5,11 Q11.5,11 11.5,6 M6.5,11 L6.5,13 M3.5,13 L9.5,13" stroke="#ea4b4f" stroke-width="1.5" fill="none"/>
      <path d="M0.5,13.5 L13,0.5" stroke="#3a3a3a" stroke-width="2.6"/>
      <path d="M0.5,13.5 L13,0.5" stroke="#ea4b4f" stroke-width="1.3"/>
    </g>
  </defs>
  <use href="#mm" x="1116.5" y="257.3"/>
  <use href="#mm" x="889.5" y="386.5"/>
  <use href="#mm" x="1116.5" y="386.5"/>
  <use href="#mm" x="889.5" y="515.5"/>
  <use href="#mm" x="1116.5" y="515.5"/>
</svg>
<div class="t" style="z-index:23;left:890px;top:258.7px;font-size:12.8px;color:#fff">Marina Penhos</div>
<div class="t" style="z-index:23;left:1135.3px;top:258.7px;font-size:12.2px;color:#fff">UNIVERSIDAD NACIONAL de QU...</div>
<div class="t" style="z-index:23;left:908.3px;top:387.8px;font-size:13.1px;color:#fff">Mirta Cano</div>
<div class="t" style="z-index:23;left:1135.3px;top:387.8px;font-size:13.1px;color:#fff">Maydée Arigós</div>
<div class="t" style="z-index:23;left:908.3px;top:516.8px;font-size:12.7px;color:#fff">Verónica Fernández</div>
<div class="t" style="z-index:23;left:1135.3px;top:516.8px;font-size:12.7px;color:#fff">Alicia Valdivia</div>

</body></html>
